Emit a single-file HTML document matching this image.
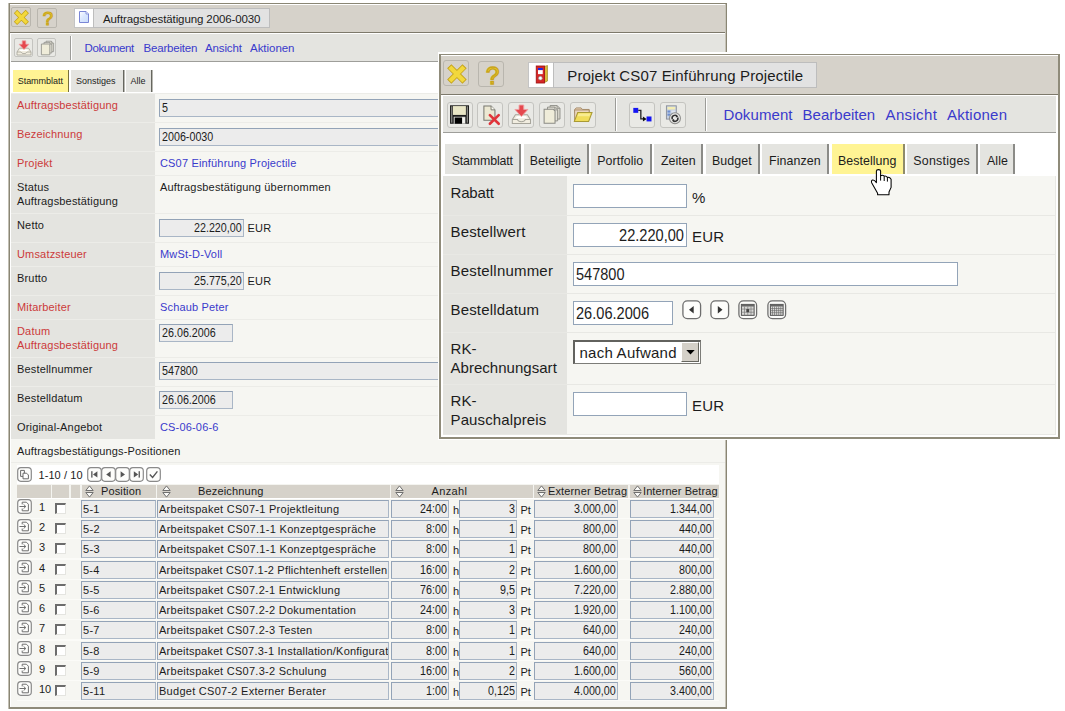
<!DOCTYPE html><html><head><meta charset="utf-8"><title>Auftragsbestätigung 2006-0030</title><style>
html,body{margin:0;padding:0;background:#fff;}
body{width:1065px;height:711px;position:relative;overflow:hidden;font-family:"Liberation Sans",Arial,sans-serif;font-size:11px;color:#1c1c1c;}
.a{position:absolute;box-sizing:border-box;}
svg.a{overflow:visible;}
.win{position:absolute;box-sizing:border-box;background:#fff;border:1px solid #8a8674;}
.tb{background:#d6d2ca;border-top:1px solid #fff;border-bottom:1px solid #7d796b;}
.bar{background:#e4e4e0;border-bottom:1px solid #9e9e9a;}
.btn{position:absolute;box-sizing:border-box;border:1px solid #b9b6ae;border-radius:2px;background:transparent;}
.btn.l{border-color:#c4c4c0;background:#e9e9e5;}
.lbl{position:absolute;box-sizing:border-box;background:#e4e4e0;border-bottom:1px solid #ecece8;}
.val{position:absolute;box-sizing:border-box;background:#f6f6f2;border-bottom:1px solid #ecece8;}
.red{color:#cc3a3a;}
.blue{color:#3a3acc;}
.inp{position:absolute;box-sizing:border-box;border:1px solid #a9b6c6;border-top-color:#93a3b7;border-left-color:#93a3b7;background:#ececec;}
.inp.w{background:#fff;}
.t{position:absolute;white-space:nowrap;}
.tab{position:absolute;box-sizing:border-box;background:#e4e4e0;border-right:1px solid #66665f;box-shadow:1px 0 0 #b8b8b2;}
.tab.on{background:#fff494;border-right:1px solid #77703a;box-shadow:none;}
.sep{position:absolute;width:2px;background:#fff;border-left:1px solid #9c9c98;box-sizing:border-box;}
</style></head><body>
<div class="win" style="left:9px;top:3px;width:718px;height:706px;border-left:1px solid #8a8674;border-right:1px solid #8a8674;border-bottom:2px solid #8f8b7a;box-shadow:inset -1px 0 0 #c6c3b8,-1px 0 0 #c2bfb4;"></div>
<div class="a tb" style="left:10px;top:4px;width:715px;height:29px;"></div>
<div class="btn" style="left:11px;top:7px;width:20px;height:20px;"></div><svg class="a" style="left:13px;top:9px;" width="16" height="16" viewBox="0 0 16 16"><path d="M2.5 2.5 L14.3 14.3 M14.3 2.5 L2.5 14.3" stroke="#c4a21a" stroke-width="4.6" stroke-linecap="butt" fill="none"/><path d="M3 3 L13.8 13.8 M13.8 3 L3 13.8" stroke="#f2d83c" stroke-width="3.3" stroke-linecap="butt" fill="none"/></svg>
<div class="btn" style="left:37px;top:8px;width:20px;height:20px;"></div><svg class="a" style="left:39px;top:10px;" width="16" height="16" viewBox="0 0 16 16"><text x="9" y="15.4" text-anchor="middle" font-family="Liberation Sans, Arial, sans-serif" font-weight="normal" font-size="18.5" fill="#f0d232" stroke="#c9a51c" stroke-width="1.1">?</text></svg>
<div class="a" style="left:74px;top:8px;width:20px;height:20px;background:#fff;border:1px solid #c4c4c4;"></div><svg class="a" style="left:76px;top:9px;" width="16" height="16" viewBox="0 0 16 16"><defs><linearGradient id="dg" x1="0" y1="0" x2="1" y2="1"><stop offset="0" stop-color="#ffffff"/><stop offset="0.45" stop-color="#dbe8ff"/><stop offset="1" stop-color="#c9dcfa"/></linearGradient></defs><path d="M3.5 2.5 H10 L12.5 5 V13.5 H3.5 Z" fill="url(#dg)" stroke="#7a86d6" stroke-width="1"/><path d="M10 2.5 V5 H12.5" fill="#eef4ff" stroke="#7a86d6" stroke-width="0.8"/></svg>
<div class="a" style="left:93px;top:8px;width:177px;height:20px;background:#e2e2e2;border:1px solid #bdbdbd;"></div>
<div class="t " style="left:103px;top:11.5px;font-size:11.5px;line-height:14.5px;letter-spacing:-0.107px;">Auftragsbestätigung 2006-0030</div>
<div class="a bar" style="left:11px;top:34px;width:714px;height:28px;"></div>
<div class="btn l" style="left:14px;top:38px;width:19px;height:19px;"></div><svg class="a" style="left:15.5px;top:39.5px;" width="16" height="16" viewBox="0 0 16 16"><path d="M3.4 8.2 H12.6 L15 12 V15 H1 V12 Z" fill="#f1ede0" stroke="#a7a59b" stroke-width="0.8"/><path d="M1 12 H5 Q5.5 13.6 8 13.6 Q10.5 13.6 11 12 H15" fill="none" stroke="#a7a59b" stroke-width="0.8"/><path d="M4.6 9.4 H11.4 L12.4 11 H3.6 Z" fill="#ffffff" stroke="none"/><path d="M6.2 0.8 H9.8 V4.2 H13 L8 9.6 L3 4.2 H6.2 Z" fill="#e5484e" stroke="#efa0a2" stroke-width="0.7"/></svg>
<div class="btn l" style="left:37px;top:38px;width:19px;height:19px;"></div><svg class="a" style="left:38.5px;top:39.5px;" width="16" height="16" viewBox="0 0 16 16"><path d="M7 1.2 H12.4 L14.6 3.4 V11.6 H7 Z" fill="#dcdad0" stroke="#8b8b85" stroke-width="0.7"/><path d="M5 2.4 H10.6 L12.8 4.6 V13 H5 Z" fill="#e4e2d8" stroke="#8b8b85" stroke-width="0.7"/><path d="M2.4 4 H9.4 L10.8 5.4 V14.8 H2.4 Z" fill="#efecd9" stroke="#8b8b85" stroke-width="0.8"/><path d="M12.4 1.2 V3.4 H14.6 M10.6 2.4 V4.6 H12.8" fill="none" stroke="#8b8b85" stroke-width="0.6"/></svg>
<div class="sep" style="left:70px;top:36px;height:24px;"></div>
<div class="t blue" style="left:84.5px;top:41px;font-size:11.5px;line-height:14.5px;letter-spacing:-0.373px;">Dokument</div>
<div class="t blue" style="left:143.6px;top:41px;font-size:11.5px;line-height:14.5px;letter-spacing:-0.214px;">Bearbeiten</div>
<div class="t blue" style="left:204.9px;top:41px;font-size:11.5px;line-height:14.5px;letter-spacing:-0.102px;">Ansicht</div>
<div class="t blue" style="left:250px;top:41px;font-size:11.5px;line-height:14.5px;letter-spacing:-0.036px;">Aktionen</div>
<div class="tab on" style="left:13px;top:70px;width:56px;height:22px;"></div>
<div class="t " style="left:17.7px;top:75px;font-size:9px;line-height:12px;letter-spacing:-0.024px;">Stammblatt</div>
<div class="tab" style="left:71px;top:70px;width:53px;height:22px;"></div>
<div class="t " style="left:76px;top:75px;font-size:9px;line-height:12px;letter-spacing:-0.003px;">Sonstiges</div>
<div class="tab" style="left:125.5px;top:70px;width:26.5px;height:22px;"></div>
<div class="t " style="left:130.5px;top:75px;font-size:9px;line-height:12px;letter-spacing:-0.003px;">Alle</div>
<div class="lbl" style="left:11px;top:93px;width:144px;height:29px;border-bottom:none;border-top:1px solid #ecece8;"></div>
<div class="val" style="left:155px;top:93px;width:570px;height:29px;border-bottom:none;border-top:1px solid #ecece8;"></div>
<div class="t red" style="left:17px;top:98px;font-size:11px;line-height:14px;letter-spacing:0.170px;">Auftragsbestätigung</div>
<div class="inp" style="left:159px;top:99px;width:566px;height:18px;border-right:none;"></div>
<div class="t " style="left:162px;top:101px;font-size:12px;line-height:15px;transform:scaleX(0.8937);transform-origin:0 0;">5</div>
<div class="lbl" style="left:11px;top:122px;width:144px;height:29px;border-bottom:none;border-top:1px solid #ecece8;"></div>
<div class="val" style="left:155px;top:122px;width:570px;height:29px;border-bottom:none;border-top:1px solid #ecece8;"></div>
<div class="t red" style="left:17px;top:127px;font-size:11px;line-height:14px;letter-spacing:0.170px;">Bezeichnung</div>
<div class="inp" style="left:159px;top:128px;width:566px;height:18px;border-right:none;"></div>
<div class="t " style="left:162px;top:130px;font-size:12px;line-height:15px;transform:scaleX(0.8937);transform-origin:0 0;">2006-0030</div>
<div class="lbl" style="left:11px;top:151px;width:144px;height:24px;border-bottom:none;border-top:1px solid #ecece8;"></div>
<div class="val" style="left:155px;top:151px;width:570px;height:24px;border-bottom:none;border-top:1px solid #ecece8;"></div>
<div class="t red" style="left:17px;top:156px;font-size:11px;line-height:14px;letter-spacing:0.170px;">Projekt</div>
<div class="t blue" style="left:160px;top:156px;font-size:11px;line-height:14px;letter-spacing:0.170px;">CS07 Einführung Projectile</div>
<div class="lbl" style="left:11px;top:175px;width:144px;height:38px;border-bottom:none;border-top:1px solid #ecece8;"></div>
<div class="val" style="left:155px;top:175px;width:570px;height:38px;border-bottom:none;border-top:1px solid #ecece8;"></div>
<div class="t " style="left:17px;top:180px;font-size:11px;line-height:14px;letter-spacing:0.170px;">Status</div>
<div class="t " style="left:17px;top:194px;font-size:11px;line-height:14px;letter-spacing:0.170px;">Auftragsbestätigung</div>
<div class="t " style="left:160px;top:180px;font-size:11px;line-height:14px;letter-spacing:0.170px;">Auftragsbestätigung übernommen</div>
<div class="lbl" style="left:11px;top:213px;width:144px;height:29px;border-bottom:none;border-top:1px solid #ecece8;"></div>
<div class="val" style="left:155px;top:213px;width:570px;height:29px;border-bottom:none;border-top:1px solid #ecece8;"></div>
<div class="t " style="left:17px;top:218px;font-size:11px;line-height:14px;letter-spacing:0.170px;">Netto</div>
<div class="inp" style="left:159px;top:219px;width:85px;height:18px;"></div>
<div class="t " style="left:194.28715625px;top:221px;font-size:12px;line-height:15px;transform:scaleX(0.8937);transform-origin:0 0;">22.220,00</div>
<div class="t " style="left:247.5px;top:221px;font-size:11px;line-height:14px;letter-spacing:0.200px;">EUR</div>
<div class="lbl" style="left:11px;top:242px;width:144px;height:24px;border-bottom:none;border-top:1px solid #ecece8;"></div>
<div class="val" style="left:155px;top:242px;width:570px;height:24px;border-bottom:none;border-top:1px solid #ecece8;"></div>
<div class="t red" style="left:17px;top:247px;font-size:11px;line-height:14px;letter-spacing:0.170px;">Umsatzsteuer</div>
<div class="t blue" style="left:160px;top:247px;font-size:11px;line-height:14px;letter-spacing:0.170px;">MwSt-D-Voll</div>
<div class="lbl" style="left:11px;top:266px;width:144px;height:29px;border-bottom:none;border-top:1px solid #ecece8;"></div>
<div class="val" style="left:155px;top:266px;width:570px;height:29px;border-bottom:none;border-top:1px solid #ecece8;"></div>
<div class="t " style="left:17px;top:271px;font-size:11px;line-height:14px;letter-spacing:0.170px;">Brutto</div>
<div class="inp" style="left:159px;top:272px;width:85px;height:18px;"></div>
<div class="t " style="left:194.28715625px;top:274px;font-size:12px;line-height:15px;transform:scaleX(0.8937);transform-origin:0 0;">25.775,20</div>
<div class="t " style="left:247.5px;top:274px;font-size:11px;line-height:14px;letter-spacing:0.200px;">EUR</div>
<div class="lbl" style="left:11px;top:295px;width:144px;height:24px;border-bottom:none;border-top:1px solid #ecece8;"></div>
<div class="val" style="left:155px;top:295px;width:570px;height:24px;border-bottom:none;border-top:1px solid #ecece8;"></div>
<div class="t red" style="left:17px;top:300px;font-size:11px;line-height:14px;letter-spacing:0.170px;">Mitarbeiter</div>
<div class="t blue" style="left:160px;top:300px;font-size:11px;line-height:14px;letter-spacing:0.170px;">Schaub Peter</div>
<div class="lbl" style="left:11px;top:319px;width:144px;height:38px;border-bottom:none;border-top:1px solid #ecece8;"></div>
<div class="val" style="left:155px;top:319px;width:570px;height:38px;border-bottom:none;border-top:1px solid #ecece8;"></div>
<div class="t red" style="left:17px;top:324px;font-size:11px;line-height:14px;letter-spacing:0.170px;">Datum</div>
<div class="t red" style="left:17px;top:338px;font-size:11px;line-height:14px;letter-spacing:0.170px;">Auftragsbestätigung</div>
<div class="inp" style="left:159px;top:324px;width:74px;height:18px;"></div>
<div class="t " style="left:162px;top:326px;font-size:12px;line-height:15px;transform:scaleX(0.8938);transform-origin:0 0;">26.06.2006</div>
<div class="lbl" style="left:11px;top:357px;width:144px;height:29px;border-bottom:none;border-top:1px solid #ecece8;"></div>
<div class="val" style="left:155px;top:357px;width:570px;height:29px;border-bottom:none;border-top:1px solid #ecece8;"></div>
<div class="t " style="left:17px;top:362px;font-size:11px;line-height:14px;letter-spacing:0.170px;">Bestellnummer</div>
<div class="inp" style="left:159px;top:362px;width:566px;height:18px;border-right:none;"></div>
<div class="t " style="left:162px;top:364px;font-size:12px;line-height:15px;transform:scaleX(0.8937);transform-origin:0 0;">547800</div>
<div class="lbl" style="left:11px;top:386px;width:144px;height:29px;border-bottom:none;border-top:1px solid #ecece8;"></div>
<div class="val" style="left:155px;top:386px;width:570px;height:29px;border-bottom:none;border-top:1px solid #ecece8;"></div>
<div class="t " style="left:17px;top:391px;font-size:11px;line-height:14px;letter-spacing:0.170px;">Bestelldatum</div>
<div class="inp" style="left:159px;top:391px;width:74px;height:18px;"></div>
<div class="t " style="left:162px;top:393px;font-size:12px;line-height:15px;transform:scaleX(0.8938);transform-origin:0 0;">26.06.2006</div>
<div class="lbl" style="left:11px;top:415px;width:144px;height:24px;border-bottom:none;border-top:1px solid #ecece8;"></div>
<div class="val" style="left:155px;top:415px;width:570px;height:24px;border-bottom:none;border-top:1px solid #ecece8;"></div>
<div class="t " style="left:17px;top:420px;font-size:11px;line-height:14px;letter-spacing:0.170px;">Original-Angebot</div>
<div class="t blue" style="left:160px;top:420px;font-size:11px;line-height:14px;letter-spacing:0.170px;">CS-06-06-6</div>
<div class="val" style="left:11px;top:439px;width:714px;height:24px;"></div>
<div class="t " style="left:17px;top:444px;font-size:11px;line-height:14px;letter-spacing:0.170px;">Auftragsbestätigungs-Positionen</div>
<div class="a" style="left:11px;top:463px;width:714px;height:244px;background:#f6f6f2;"></div>
<div class="a" style="left:17px;top:465px;width:702px;height:34px;background:#fff;"></div>
<div class="a" style="left:17px;top:499px;width:702px;height:202px;background:#fbfbf8;"></div>
<svg class="a" style="left:17px;top:467px;" width="15" height="15" viewBox="0 0 15 15"><rect x="0.7" y="0.7" width="13.6" height="13.6" rx="3.2" ry="3.2" fill="#fdfdfb" stroke="#8a8a8a" stroke-width="1.2"/><path d="M3.6 3.4 H7.4 V7" fill="none" stroke="#6a6a6a" stroke-width="1"/><path d="M3.6 3.4 V9.4 H6" fill="none" stroke="#6a6a6a" stroke-width="1"/><path d="M6 6.2 H9.6 L11.4 8 V11.8 H6 Z" fill="#fff" stroke="#6a6a6a" stroke-width="1"/></svg>
<div class="t " style="left:38.5px;top:468px;font-size:11px;line-height:14px;letter-spacing:0.072px;">1-10 / 10</div>
<svg class="a" style="left:87px;top:467px;" width="15" height="15" viewBox="0 0 15 15"><rect x="0.7" y="0.7" width="13.6" height="13.6" rx="3.2" ry="3.2" fill="#fdfdfb" stroke="#8a8a8a" stroke-width="1.2"/><rect x="4.2" y="4.2" width="1.3" height="6.4" fill="#555"/><path d="M10.4 4.2 V10.6 L6 7.4 Z" fill="#555"/></svg>
<svg class="a" style="left:101px;top:467px;" width="15" height="15" viewBox="0 0 15 15"><rect x="0.7" y="0.7" width="13.6" height="13.6" rx="3.2" ry="3.2" fill="#fdfdfb" stroke="#8a8a8a" stroke-width="1.2"/><path d="M9.6 4.2 V10.6 L5.2 7.4 Z" fill="#555"/></svg>
<svg class="a" style="left:115px;top:467px;" width="15" height="15" viewBox="0 0 15 15"><rect x="0.7" y="0.7" width="13.6" height="13.6" rx="3.2" ry="3.2" fill="#fdfdfb" stroke="#8a8a8a" stroke-width="1.2"/><path d="M5.6 4.2 V10.6 L10 7.4 Z" fill="#555"/></svg>
<svg class="a" style="left:129px;top:467px;" width="15" height="15" viewBox="0 0 15 15"><rect x="0.7" y="0.7" width="13.6" height="13.6" rx="3.2" ry="3.2" fill="#fdfdfb" stroke="#8a8a8a" stroke-width="1.2"/><rect x="9.6" y="4.2" width="1.3" height="6.4" fill="#555"/><path d="M4.8 4.2 V10.6 L9.2 7.4 Z" fill="#555"/></svg>
<svg class="a" style="left:146px;top:467px;" width="15" height="15" viewBox="0 0 15 15"><rect x="0.7" y="0.7" width="13.6" height="13.6" rx="3.2" ry="3.2" fill="#fdfdfb" stroke="#8a8a8a" stroke-width="1.2"/><path d="M3.8 7.4 L6.6 10.4 L11.4 4.4" fill="none" stroke="#555" stroke-width="1.4"/></svg>
<div class="a" style="left:17px;top:484px;width:702px;height:14px;background:#f4f4f0;"></div>
<div class="a" style="left:17px;top:484.5px;width:33.5px;height:13.5px;background:#d6d2ca;"></div>
<div class="a" style="left:52px;top:484.5px;width:17px;height:13.5px;background:#d6d2ca;"></div>
<div class="a" style="left:70.5px;top:484.5px;width:9.5px;height:13.5px;background:#d6d2ca;"></div>
<div class="a" style="left:81.5px;top:484.5px;width:74.0px;height:13.5px;background:#d6d2ca;"></div>
<div class="a" style="left:157px;top:484.5px;width:233px;height:13.5px;background:#d6d2ca;"></div>
<div class="a" style="left:391px;top:484.5px;width:141.5px;height:13.5px;background:#d6d2ca;"></div>
<div class="a" style="left:534px;top:484.5px;width:94px;height:13.5px;background:#d6d2ca;"></div>
<div class="a" style="left:629.5px;top:484.5px;width:89.5px;height:13.5px;background:#d6d2ca;"></div>
<div class="t " style="left:101px;top:484px;font-size:11px;line-height:14px;letter-spacing:0.124px;">Position</div>
<svg class="a" style="left:85.0px;top:485px;" width="9" height="13" viewBox="0 0 9 13"><path d="M0.8 5.5 L4.5 0.9 L8.2 5.5 Z" fill="#fafaf8" stroke="#707070" stroke-width="1"/><path d="M0.8 7.5 L4.5 12.1 L8.2 7.5 Z" fill="#fafaf8" stroke="#707070" stroke-width="1"/></svg>
<div class="t " style="left:198px;top:484px;font-size:11px;line-height:14px;letter-spacing:0.170px;">Bezeichnung</div>
<svg class="a" style="left:161.5px;top:485px;" width="9" height="13" viewBox="0 0 9 13"><path d="M0.8 5.5 L4.5 0.9 L8.2 5.5 Z" fill="#fafaf8" stroke="#707070" stroke-width="1"/><path d="M0.8 7.5 L4.5 12.1 L8.2 7.5 Z" fill="#fafaf8" stroke="#707070" stroke-width="1"/></svg>
<div class="t " style="left:431.5px;top:484px;font-size:11px;line-height:14px;letter-spacing:0.373px;">Anzahl</div>
<svg class="a" style="left:395.0px;top:485px;" width="9" height="13" viewBox="0 0 9 13"><path d="M0.8 5.5 L4.5 0.9 L8.2 5.5 Z" fill="#fafaf8" stroke="#707070" stroke-width="1"/><path d="M0.8 7.5 L4.5 12.1 L8.2 7.5 Z" fill="#fafaf8" stroke="#707070" stroke-width="1"/></svg>
<div class="t " style="left:548px;top:484px;font-size:11px;line-height:14px;letter-spacing:0.140px;">Externer Betrag</div>
<svg class="a" style="left:537.0px;top:485px;" width="9" height="13" viewBox="0 0 9 13"><path d="M0.8 5.5 L4.5 0.9 L8.2 5.5 Z" fill="#fafaf8" stroke="#707070" stroke-width="1"/><path d="M0.8 7.5 L4.5 12.1 L8.2 7.5 Z" fill="#fafaf8" stroke="#707070" stroke-width="1"/></svg>
<div class="t " style="left:643px;top:484px;font-size:11px;line-height:14px;letter-spacing:0.080px;">Interner Betrag</div>
<svg class="a" style="left:632.5px;top:485px;" width="9" height="13" viewBox="0 0 9 13"><path d="M0.8 5.5 L4.5 0.9 L8.2 5.5 Z" fill="#fafaf8" stroke="#707070" stroke-width="1"/><path d="M0.8 7.5 L4.5 12.1 L8.2 7.5 Z" fill="#fafaf8" stroke="#707070" stroke-width="1"/></svg>
<div class="a" style="left:17px;top:499px;width:702px;height:19px;background:#f6f6f2;"></div>
<svg class="a" style="left:17px;top:499px;" width="15" height="15" viewBox="0 0 15 15"><rect x="0.7" y="0.7" width="13.6" height="13.6" rx="3.2" ry="3.2" fill="#fdfdfb" stroke="#8a8a8a" stroke-width="1.2"/><path d="M5.2 3.2 H9.4 L11.4 5.2 V11.8 H5.2 V9.6" fill="none" stroke="#6e6e6e" stroke-width="1"/><path d="M5.2 3.2 V5.4" stroke="#6e6e6e" stroke-width="1"/><path d="M2.4 7.5 H8.6 M6.6 5.4 L8.8 7.5 L6.6 9.6" fill="none" stroke="#6e6e6e" stroke-width="1"/></svg>
<div class="t " style="left:39px;top:500px;font-size:11px;line-height:14px;letter-spacing:0.000px;">1</div>
<div class="a" style="left:55px;top:503px;width:11px;height:11px;background:#fff;border-top:2px solid #6c6c6c;border-left:2px solid #6c6c6c;border-right:1px solid #e4e4e0;border-bottom:1px solid #e4e4e0;"></div>
<div class="inp" style="left:81px;top:500px;width:74.5px;height:18px;"></div>
<div class="t" style="left:83px;top:502px;width:71.5px;overflow:hidden;font-size:11px;line-height:14px;letter-spacing:0.27px;">5-1</div>
<div class="inp" style="left:157px;top:500px;width:232px;height:18px;"></div>
<div class="t" style="left:159px;top:502px;width:229px;overflow:hidden;font-size:11px;line-height:14px;letter-spacing:0.27px;">Arbeitspaket CS07-1 Projektleitung</div>
<div class="inp" style="left:391px;top:500px;width:57.5px;height:18px;"></div>
<div class="t " style="left:419.661190234375px;top:502px;font-size:12px;line-height:15px;transform:scaleX(0.8938);transform-origin:0 0;">24:00</div>
<div class="t " style="left:453px;top:503px;font-size:11px;line-height:14px;">h</div>
<div class="inp" style="left:459px;top:500px;width:58px;height:18px;"></div>
<div class="t " style="left:509.03522421875px;top:502px;font-size:12px;line-height:15px;transform:scaleX(0.8937);transform-origin:0 0;">3</div>
<div class="t " style="left:520.5px;top:503px;font-size:11px;line-height:14px;">Pt</div>
<div class="inp" style="left:534px;top:500px;width:84px;height:18px;"></div>
<div class="t " style="left:574.25193203125px;top:502px;font-size:12px;line-height:15px;transform:scaleX(0.8937);transform-origin:0 0;">3.000,00</div>
<div class="inp" style="left:629.5px;top:500px;width:84px;height:18px;"></div>
<div class="t " style="left:669.75193203125px;top:502px;font-size:12px;line-height:15px;transform:scaleX(0.8937);transform-origin:0 0;">1.344,00</div>
<div class="a" style="left:17px;top:519px;width:702px;height:19px;background:#f6f6f2;"></div>
<svg class="a" style="left:17px;top:519px;" width="15" height="15" viewBox="0 0 15 15"><rect x="0.7" y="0.7" width="13.6" height="13.6" rx="3.2" ry="3.2" fill="#fdfdfb" stroke="#8a8a8a" stroke-width="1.2"/><path d="M5.2 3.2 H9.4 L11.4 5.2 V11.8 H5.2 V9.6" fill="none" stroke="#6e6e6e" stroke-width="1"/><path d="M5.2 3.2 V5.4" stroke="#6e6e6e" stroke-width="1"/><path d="M2.4 7.5 H8.6 M6.6 5.4 L8.8 7.5 L6.6 9.6" fill="none" stroke="#6e6e6e" stroke-width="1"/></svg>
<div class="t " style="left:39px;top:520px;font-size:11px;line-height:14px;letter-spacing:0.000px;">2</div>
<div class="a" style="left:55px;top:523px;width:11px;height:11px;background:#fff;border-top:2px solid #6c6c6c;border-left:2px solid #6c6c6c;border-right:1px solid #e4e4e0;border-bottom:1px solid #e4e4e0;"></div>
<div class="inp" style="left:81px;top:520px;width:74.5px;height:18px;"></div>
<div class="t" style="left:83px;top:522px;width:71.5px;overflow:hidden;font-size:11px;line-height:14px;letter-spacing:0.31px;">5-2</div>
<div class="inp" style="left:157px;top:520px;width:232px;height:18px;"></div>
<div class="t" style="left:159px;top:522px;width:229px;overflow:hidden;font-size:11px;line-height:14px;letter-spacing:0.31px;">Arbeitspaket CS07.1-1 Konzeptgespräche</div>
<div class="inp" style="left:391px;top:520px;width:57.5px;height:18px;"></div>
<div class="t " style="left:425.625966015625px;top:522px;font-size:12px;line-height:15px;transform:scaleX(0.8937);transform-origin:0 0;">8:00</div>
<div class="t " style="left:453px;top:523px;font-size:11px;line-height:14px;">h</div>
<div class="inp" style="left:459px;top:520px;width:58px;height:18px;"></div>
<div class="t " style="left:509.03522421875px;top:522px;font-size:12px;line-height:15px;transform:scaleX(0.8937);transform-origin:0 0;">1</div>
<div class="t " style="left:520.5px;top:523px;font-size:11px;line-height:14px;">Pt</div>
<div class="inp" style="left:534px;top:520px;width:84px;height:18px;"></div>
<div class="t " style="left:583.196414453125px;top:522px;font-size:12px;line-height:15px;transform:scaleX(0.8937);transform-origin:0 0;">800,00</div>
<div class="inp" style="left:629.5px;top:520px;width:84px;height:18px;"></div>
<div class="t " style="left:678.696414453125px;top:522px;font-size:12px;line-height:15px;transform:scaleX(0.8937);transform-origin:0 0;">440,00</div>
<div class="a" style="left:17px;top:539px;width:702px;height:19px;background:#f6f6f2;"></div>
<svg class="a" style="left:17px;top:539px;" width="15" height="15" viewBox="0 0 15 15"><rect x="0.7" y="0.7" width="13.6" height="13.6" rx="3.2" ry="3.2" fill="#fdfdfb" stroke="#8a8a8a" stroke-width="1.2"/><path d="M5.2 3.2 H9.4 L11.4 5.2 V11.8 H5.2 V9.6" fill="none" stroke="#6e6e6e" stroke-width="1"/><path d="M5.2 3.2 V5.4" stroke="#6e6e6e" stroke-width="1"/><path d="M2.4 7.5 H8.6 M6.6 5.4 L8.8 7.5 L6.6 9.6" fill="none" stroke="#6e6e6e" stroke-width="1"/></svg>
<div class="t " style="left:39px;top:540px;font-size:11px;line-height:14px;letter-spacing:0.000px;">3</div>
<div class="a" style="left:55px;top:543px;width:11px;height:11px;background:#fff;border-top:2px solid #6c6c6c;border-left:2px solid #6c6c6c;border-right:1px solid #e4e4e0;border-bottom:1px solid #e4e4e0;"></div>
<div class="inp" style="left:81px;top:540px;width:74.5px;height:18px;"></div>
<div class="t" style="left:83px;top:542px;width:71.5px;overflow:hidden;font-size:11px;line-height:14px;letter-spacing:0.31px;">5-3</div>
<div class="inp" style="left:157px;top:540px;width:232px;height:18px;"></div>
<div class="t" style="left:159px;top:542px;width:229px;overflow:hidden;font-size:11px;line-height:14px;letter-spacing:0.31px;">Arbeitspaket CS07.1-1 Konzeptgespräche</div>
<div class="inp" style="left:391px;top:540px;width:57.5px;height:18px;"></div>
<div class="t " style="left:425.625966015625px;top:542px;font-size:12px;line-height:15px;transform:scaleX(0.8937);transform-origin:0 0;">8:00</div>
<div class="t " style="left:453px;top:543px;font-size:11px;line-height:14px;">h</div>
<div class="inp" style="left:459px;top:540px;width:58px;height:18px;"></div>
<div class="t " style="left:509.03522421875px;top:542px;font-size:12px;line-height:15px;transform:scaleX(0.8937);transform-origin:0 0;">1</div>
<div class="t " style="left:520.5px;top:543px;font-size:11px;line-height:14px;">Pt</div>
<div class="inp" style="left:534px;top:540px;width:84px;height:18px;"></div>
<div class="t " style="left:583.196414453125px;top:542px;font-size:12px;line-height:15px;transform:scaleX(0.8937);transform-origin:0 0;">800,00</div>
<div class="inp" style="left:629.5px;top:540px;width:84px;height:18px;"></div>
<div class="t " style="left:678.696414453125px;top:542px;font-size:12px;line-height:15px;transform:scaleX(0.8937);transform-origin:0 0;">440,00</div>
<div class="a" style="left:17px;top:560px;width:702px;height:19px;background:#f6f6f2;"></div>
<svg class="a" style="left:17px;top:560px;" width="15" height="15" viewBox="0 0 15 15"><rect x="0.7" y="0.7" width="13.6" height="13.6" rx="3.2" ry="3.2" fill="#fdfdfb" stroke="#8a8a8a" stroke-width="1.2"/><path d="M5.2 3.2 H9.4 L11.4 5.2 V11.8 H5.2 V9.6" fill="none" stroke="#6e6e6e" stroke-width="1"/><path d="M5.2 3.2 V5.4" stroke="#6e6e6e" stroke-width="1"/><path d="M2.4 7.5 H8.6 M6.6 5.4 L8.8 7.5 L6.6 9.6" fill="none" stroke="#6e6e6e" stroke-width="1"/></svg>
<div class="t " style="left:39px;top:561px;font-size:11px;line-height:14px;letter-spacing:0.000px;">4</div>
<div class="a" style="left:55px;top:564px;width:11px;height:11px;background:#fff;border-top:2px solid #6c6c6c;border-left:2px solid #6c6c6c;border-right:1px solid #e4e4e0;border-bottom:1px solid #e4e4e0;"></div>
<div class="inp" style="left:81px;top:561px;width:74.5px;height:18px;"></div>
<div class="t" style="left:83px;top:563px;width:71.5px;overflow:hidden;font-size:11px;line-height:14px;letter-spacing:0.21px;">5-4</div>
<div class="inp" style="left:157px;top:561px;width:232px;height:18px;"></div>
<div class="t" style="left:159px;top:563px;width:229px;overflow:hidden;font-size:11px;line-height:14px;letter-spacing:0.21px;">Arbeitspaket CS07.1-2 Pflichtenheft erstellen</div>
<div class="inp" style="left:391px;top:561px;width:57.5px;height:18px;"></div>
<div class="t " style="left:419.661190234375px;top:563px;font-size:12px;line-height:15px;transform:scaleX(0.8938);transform-origin:0 0;">16:00</div>
<div class="t " style="left:453px;top:564px;font-size:11px;line-height:14px;">h</div>
<div class="inp" style="left:459px;top:561px;width:58px;height:18px;"></div>
<div class="t " style="left:509.03522421875px;top:563px;font-size:12px;line-height:15px;transform:scaleX(0.8937);transform-origin:0 0;">2</div>
<div class="t " style="left:520.5px;top:564px;font-size:11px;line-height:14px;">Pt</div>
<div class="inp" style="left:534px;top:561px;width:84px;height:18px;"></div>
<div class="t " style="left:574.25193203125px;top:563px;font-size:12px;line-height:15px;transform:scaleX(0.8937);transform-origin:0 0;">1.600,00</div>
<div class="inp" style="left:629.5px;top:561px;width:84px;height:18px;"></div>
<div class="t " style="left:678.696414453125px;top:563px;font-size:12px;line-height:15px;transform:scaleX(0.8937);transform-origin:0 0;">800,00</div>
<div class="a" style="left:17px;top:580px;width:702px;height:19px;background:#f6f6f2;"></div>
<svg class="a" style="left:17px;top:580px;" width="15" height="15" viewBox="0 0 15 15"><rect x="0.7" y="0.7" width="13.6" height="13.6" rx="3.2" ry="3.2" fill="#fdfdfb" stroke="#8a8a8a" stroke-width="1.2"/><path d="M5.2 3.2 H9.4 L11.4 5.2 V11.8 H5.2 V9.6" fill="none" stroke="#6e6e6e" stroke-width="1"/><path d="M5.2 3.2 V5.4" stroke="#6e6e6e" stroke-width="1"/><path d="M2.4 7.5 H8.6 M6.6 5.4 L8.8 7.5 L6.6 9.6" fill="none" stroke="#6e6e6e" stroke-width="1"/></svg>
<div class="t " style="left:39px;top:581px;font-size:11px;line-height:14px;letter-spacing:0.000px;">5</div>
<div class="a" style="left:55px;top:584px;width:11px;height:11px;background:#fff;border-top:2px solid #6c6c6c;border-left:2px solid #6c6c6c;border-right:1px solid #e4e4e0;border-bottom:1px solid #e4e4e0;"></div>
<div class="inp" style="left:81px;top:581px;width:74.5px;height:18px;"></div>
<div class="t" style="left:83px;top:583px;width:71.5px;overflow:hidden;font-size:11px;line-height:14px;letter-spacing:0.27px;">5-5</div>
<div class="inp" style="left:157px;top:581px;width:232px;height:18px;"></div>
<div class="t" style="left:159px;top:583px;width:229px;overflow:hidden;font-size:11px;line-height:14px;letter-spacing:0.27px;">Arbeitspaket CS07.2-1 Entwicklung</div>
<div class="inp" style="left:391px;top:581px;width:57.5px;height:18px;"></div>
<div class="t " style="left:419.661190234375px;top:583px;font-size:12px;line-height:15px;transform:scaleX(0.8938);transform-origin:0 0;">76:00</div>
<div class="t " style="left:453px;top:584px;font-size:11px;line-height:14px;">h</div>
<div class="inp" style="left:459px;top:581px;width:58px;height:18px;"></div>
<div class="t " style="left:500.090741796875px;top:583px;font-size:12px;line-height:15px;transform:scaleX(0.8938);transform-origin:0 0;">9,5</div>
<div class="t " style="left:520.5px;top:584px;font-size:11px;line-height:14px;">Pt</div>
<div class="inp" style="left:534px;top:581px;width:84px;height:18px;"></div>
<div class="t " style="left:574.25193203125px;top:583px;font-size:12px;line-height:15px;transform:scaleX(0.8937);transform-origin:0 0;">7.220,00</div>
<div class="inp" style="left:629.5px;top:581px;width:84px;height:18px;"></div>
<div class="t " style="left:669.75193203125px;top:583px;font-size:12px;line-height:15px;transform:scaleX(0.8937);transform-origin:0 0;">2.880,00</div>
<div class="a" style="left:17px;top:600px;width:702px;height:19px;background:#f6f6f2;"></div>
<svg class="a" style="left:17px;top:600px;" width="15" height="15" viewBox="0 0 15 15"><rect x="0.7" y="0.7" width="13.6" height="13.6" rx="3.2" ry="3.2" fill="#fdfdfb" stroke="#8a8a8a" stroke-width="1.2"/><path d="M5.2 3.2 H9.4 L11.4 5.2 V11.8 H5.2 V9.6" fill="none" stroke="#6e6e6e" stroke-width="1"/><path d="M5.2 3.2 V5.4" stroke="#6e6e6e" stroke-width="1"/><path d="M2.4 7.5 H8.6 M6.6 5.4 L8.8 7.5 L6.6 9.6" fill="none" stroke="#6e6e6e" stroke-width="1"/></svg>
<div class="t " style="left:39px;top:601px;font-size:11px;line-height:14px;letter-spacing:0.000px;">6</div>
<div class="a" style="left:55px;top:604px;width:11px;height:11px;background:#fff;border-top:2px solid #6c6c6c;border-left:2px solid #6c6c6c;border-right:1px solid #e4e4e0;border-bottom:1px solid #e4e4e0;"></div>
<div class="inp" style="left:81px;top:601px;width:74.5px;height:18px;"></div>
<div class="t" style="left:83px;top:603px;width:71.5px;overflow:hidden;font-size:11px;line-height:14px;letter-spacing:0.27px;">5-6</div>
<div class="inp" style="left:157px;top:601px;width:232px;height:18px;"></div>
<div class="t" style="left:159px;top:603px;width:229px;overflow:hidden;font-size:11px;line-height:14px;letter-spacing:0.27px;">Arbeitspaket CS07.2-2 Dokumentation</div>
<div class="inp" style="left:391px;top:601px;width:57.5px;height:18px;"></div>
<div class="t " style="left:419.661190234375px;top:603px;font-size:12px;line-height:15px;transform:scaleX(0.8938);transform-origin:0 0;">24:00</div>
<div class="t " style="left:453px;top:604px;font-size:11px;line-height:14px;">h</div>
<div class="inp" style="left:459px;top:601px;width:58px;height:18px;"></div>
<div class="t " style="left:509.03522421875px;top:603px;font-size:12px;line-height:15px;transform:scaleX(0.8937);transform-origin:0 0;">3</div>
<div class="t " style="left:520.5px;top:604px;font-size:11px;line-height:14px;">Pt</div>
<div class="inp" style="left:534px;top:601px;width:84px;height:18px;"></div>
<div class="t " style="left:574.25193203125px;top:603px;font-size:12px;line-height:15px;transform:scaleX(0.8937);transform-origin:0 0;">1.920,00</div>
<div class="inp" style="left:629.5px;top:601px;width:84px;height:18px;"></div>
<div class="t " style="left:669.75193203125px;top:603px;font-size:12px;line-height:15px;transform:scaleX(0.8937);transform-origin:0 0;">1.100,00</div>
<div class="a" style="left:17px;top:620px;width:702px;height:19px;background:#f6f6f2;"></div>
<svg class="a" style="left:17px;top:620px;" width="15" height="15" viewBox="0 0 15 15"><rect x="0.7" y="0.7" width="13.6" height="13.6" rx="3.2" ry="3.2" fill="#fdfdfb" stroke="#8a8a8a" stroke-width="1.2"/><path d="M5.2 3.2 H9.4 L11.4 5.2 V11.8 H5.2 V9.6" fill="none" stroke="#6e6e6e" stroke-width="1"/><path d="M5.2 3.2 V5.4" stroke="#6e6e6e" stroke-width="1"/><path d="M2.4 7.5 H8.6 M6.6 5.4 L8.8 7.5 L6.6 9.6" fill="none" stroke="#6e6e6e" stroke-width="1"/></svg>
<div class="t " style="left:39px;top:621px;font-size:11px;line-height:14px;letter-spacing:0.000px;">7</div>
<div class="a" style="left:55px;top:624px;width:11px;height:11px;background:#fff;border-top:2px solid #6c6c6c;border-left:2px solid #6c6c6c;border-right:1px solid #e4e4e0;border-bottom:1px solid #e4e4e0;"></div>
<div class="inp" style="left:81px;top:621px;width:74.5px;height:18px;"></div>
<div class="t" style="left:83px;top:623px;width:71.5px;overflow:hidden;font-size:11px;line-height:14px;letter-spacing:0.27px;">5-7</div>
<div class="inp" style="left:157px;top:621px;width:232px;height:18px;"></div>
<div class="t" style="left:159px;top:623px;width:229px;overflow:hidden;font-size:11px;line-height:14px;letter-spacing:0.27px;">Arbeitspaket CS07.2-3 Testen</div>
<div class="inp" style="left:391px;top:621px;width:57.5px;height:18px;"></div>
<div class="t " style="left:425.625966015625px;top:623px;font-size:12px;line-height:15px;transform:scaleX(0.8937);transform-origin:0 0;">8:00</div>
<div class="t " style="left:453px;top:624px;font-size:11px;line-height:14px;">h</div>
<div class="inp" style="left:459px;top:621px;width:58px;height:18px;"></div>
<div class="t " style="left:509.03522421875px;top:623px;font-size:12px;line-height:15px;transform:scaleX(0.8937);transform-origin:0 0;">1</div>
<div class="t " style="left:520.5px;top:624px;font-size:11px;line-height:14px;">Pt</div>
<div class="inp" style="left:534px;top:621px;width:84px;height:18px;"></div>
<div class="t " style="left:583.196414453125px;top:623px;font-size:12px;line-height:15px;transform:scaleX(0.8937);transform-origin:0 0;">640,00</div>
<div class="inp" style="left:629.5px;top:621px;width:84px;height:18px;"></div>
<div class="t " style="left:678.696414453125px;top:623px;font-size:12px;line-height:15px;transform:scaleX(0.8937);transform-origin:0 0;">240,00</div>
<div class="a" style="left:17px;top:641px;width:702px;height:19px;background:#f6f6f2;"></div>
<svg class="a" style="left:17px;top:641px;" width="15" height="15" viewBox="0 0 15 15"><rect x="0.7" y="0.7" width="13.6" height="13.6" rx="3.2" ry="3.2" fill="#fdfdfb" stroke="#8a8a8a" stroke-width="1.2"/><path d="M5.2 3.2 H9.4 L11.4 5.2 V11.8 H5.2 V9.6" fill="none" stroke="#6e6e6e" stroke-width="1"/><path d="M5.2 3.2 V5.4" stroke="#6e6e6e" stroke-width="1"/><path d="M2.4 7.5 H8.6 M6.6 5.4 L8.8 7.5 L6.6 9.6" fill="none" stroke="#6e6e6e" stroke-width="1"/></svg>
<div class="t " style="left:39px;top:642px;font-size:11px;line-height:14px;letter-spacing:0.000px;">8</div>
<div class="a" style="left:55px;top:645px;width:11px;height:11px;background:#fff;border-top:2px solid #6c6c6c;border-left:2px solid #6c6c6c;border-right:1px solid #e4e4e0;border-bottom:1px solid #e4e4e0;"></div>
<div class="inp" style="left:81px;top:642px;width:74.5px;height:18px;"></div>
<div class="t" style="left:83px;top:644px;width:71.5px;overflow:hidden;font-size:11px;line-height:14px;letter-spacing:0.22px;">5-8</div>
<div class="inp" style="left:157px;top:642px;width:232px;height:18px;"></div>
<div class="t" style="left:159px;top:644px;width:229px;overflow:hidden;font-size:11px;line-height:14px;letter-spacing:0.22px;">Arbeitspaket CS07.3-1 Installation/Konfigurat</div>
<div class="inp" style="left:391px;top:642px;width:57.5px;height:18px;"></div>
<div class="t " style="left:425.625966015625px;top:644px;font-size:12px;line-height:15px;transform:scaleX(0.8937);transform-origin:0 0;">8:00</div>
<div class="t " style="left:453px;top:645px;font-size:11px;line-height:14px;">h</div>
<div class="inp" style="left:459px;top:642px;width:58px;height:18px;"></div>
<div class="t " style="left:509.03522421875px;top:644px;font-size:12px;line-height:15px;transform:scaleX(0.8937);transform-origin:0 0;">1</div>
<div class="t " style="left:520.5px;top:645px;font-size:11px;line-height:14px;">Pt</div>
<div class="inp" style="left:534px;top:642px;width:84px;height:18px;"></div>
<div class="t " style="left:583.196414453125px;top:644px;font-size:12px;line-height:15px;transform:scaleX(0.8937);transform-origin:0 0;">640,00</div>
<div class="inp" style="left:629.5px;top:642px;width:84px;height:18px;"></div>
<div class="t " style="left:678.696414453125px;top:644px;font-size:12px;line-height:15px;transform:scaleX(0.8937);transform-origin:0 0;">240,00</div>
<div class="a" style="left:17px;top:661px;width:702px;height:19px;background:#f6f6f2;"></div>
<svg class="a" style="left:17px;top:661px;" width="15" height="15" viewBox="0 0 15 15"><rect x="0.7" y="0.7" width="13.6" height="13.6" rx="3.2" ry="3.2" fill="#fdfdfb" stroke="#8a8a8a" stroke-width="1.2"/><path d="M5.2 3.2 H9.4 L11.4 5.2 V11.8 H5.2 V9.6" fill="none" stroke="#6e6e6e" stroke-width="1"/><path d="M5.2 3.2 V5.4" stroke="#6e6e6e" stroke-width="1"/><path d="M2.4 7.5 H8.6 M6.6 5.4 L8.8 7.5 L6.6 9.6" fill="none" stroke="#6e6e6e" stroke-width="1"/></svg>
<div class="t " style="left:39px;top:662px;font-size:11px;line-height:14px;letter-spacing:0.000px;">9</div>
<div class="a" style="left:55px;top:665px;width:11px;height:11px;background:#fff;border-top:2px solid #6c6c6c;border-left:2px solid #6c6c6c;border-right:1px solid #e4e4e0;border-bottom:1px solid #e4e4e0;"></div>
<div class="inp" style="left:81px;top:662px;width:74.5px;height:18px;"></div>
<div class="t" style="left:83px;top:664px;width:71.5px;overflow:hidden;font-size:11px;line-height:14px;letter-spacing:0.27px;">5-9</div>
<div class="inp" style="left:157px;top:662px;width:232px;height:18px;"></div>
<div class="t" style="left:159px;top:664px;width:229px;overflow:hidden;font-size:11px;line-height:14px;letter-spacing:0.27px;">Arbeitspaket CS07.3-2 Schulung</div>
<div class="inp" style="left:391px;top:662px;width:57.5px;height:18px;"></div>
<div class="t " style="left:419.661190234375px;top:664px;font-size:12px;line-height:15px;transform:scaleX(0.8938);transform-origin:0 0;">16:00</div>
<div class="t " style="left:453px;top:665px;font-size:11px;line-height:14px;">h</div>
<div class="inp" style="left:459px;top:662px;width:58px;height:18px;"></div>
<div class="t " style="left:509.03522421875px;top:664px;font-size:12px;line-height:15px;transform:scaleX(0.8937);transform-origin:0 0;">2</div>
<div class="t " style="left:520.5px;top:665px;font-size:11px;line-height:14px;">Pt</div>
<div class="inp" style="left:534px;top:662px;width:84px;height:18px;"></div>
<div class="t " style="left:574.25193203125px;top:664px;font-size:12px;line-height:15px;transform:scaleX(0.8937);transform-origin:0 0;">1.600,00</div>
<div class="inp" style="left:629.5px;top:662px;width:84px;height:18px;"></div>
<div class="t " style="left:678.696414453125px;top:664px;font-size:12px;line-height:15px;transform:scaleX(0.8937);transform-origin:0 0;">560,00</div>
<div class="a" style="left:17px;top:681px;width:702px;height:19px;background:#f6f6f2;"></div>
<svg class="a" style="left:17px;top:681px;" width="15" height="15" viewBox="0 0 15 15"><rect x="0.7" y="0.7" width="13.6" height="13.6" rx="3.2" ry="3.2" fill="#fdfdfb" stroke="#8a8a8a" stroke-width="1.2"/><path d="M5.2 3.2 H9.4 L11.4 5.2 V11.8 H5.2 V9.6" fill="none" stroke="#6e6e6e" stroke-width="1"/><path d="M5.2 3.2 V5.4" stroke="#6e6e6e" stroke-width="1"/><path d="M2.4 7.5 H8.6 M6.6 5.4 L8.8 7.5 L6.6 9.6" fill="none" stroke="#6e6e6e" stroke-width="1"/></svg>
<div class="t " style="left:39px;top:682px;font-size:11px;line-height:14px;letter-spacing:0.000px;">10</div>
<div class="a" style="left:55px;top:685px;width:11px;height:11px;background:#fff;border-top:2px solid #6c6c6c;border-left:2px solid #6c6c6c;border-right:1px solid #e4e4e0;border-bottom:1px solid #e4e4e0;"></div>
<div class="inp" style="left:81px;top:682px;width:74.5px;height:18px;"></div>
<div class="t" style="left:83px;top:684px;width:71.5px;overflow:hidden;font-size:11px;line-height:14px;letter-spacing:0.27px;">5-11</div>
<div class="inp" style="left:157px;top:682px;width:232px;height:18px;"></div>
<div class="t" style="left:159px;top:684px;width:229px;overflow:hidden;font-size:11px;line-height:14px;letter-spacing:0.27px;">Budget CS07-2 Externer Berater</div>
<div class="inp" style="left:391px;top:682px;width:57.5px;height:18px;"></div>
<div class="t " style="left:425.625966015625px;top:684px;font-size:12px;line-height:15px;transform:scaleX(0.8937);transform-origin:0 0;">1:00</div>
<div class="t " style="left:453px;top:685px;font-size:11px;line-height:14px;">h</div>
<div class="inp" style="left:459px;top:682px;width:58px;height:18px;"></div>
<div class="t " style="left:488.161190234375px;top:684px;font-size:12px;line-height:15px;transform:scaleX(0.8938);transform-origin:0 0;">0,125</div>
<div class="t " style="left:520.5px;top:685px;font-size:11px;line-height:14px;">Pt</div>
<div class="inp" style="left:534px;top:682px;width:84px;height:18px;"></div>
<div class="t " style="left:574.25193203125px;top:684px;font-size:12px;line-height:15px;transform:scaleX(0.8937);transform-origin:0 0;">4.000,00</div>
<div class="inp" style="left:629.5px;top:682px;width:84px;height:18px;"></div>
<div class="t " style="left:669.75193203125px;top:684px;font-size:12px;line-height:15px;transform:scaleX(0.8937);transform-origin:0 0;">3.400,00</div>
<div class="a" style="left:437.5px;top:52px;width:623px;height:388px;background:#fff;"></div>
<div class="win" style="left:439px;top:53.5px;width:621px;height:385.5px;border-width:2px;border-color:#8f8b7a;"></div>
<div class="a tb" style="left:441px;top:55px;width:617px;height:39.5px;border-bottom-width:1.5px;"></div>
<div class="btn" style="left:443.3px;top:60px;width:26px;height:26px;border-radius:3px;"></div><svg class="a" style="left:446px;top:62.6px;" width="20.8" height="20.8" viewBox="0 0 16 16"><path d="M2.5 2.5 L14.3 14.3 M14.3 2.5 L2.5 14.3" stroke="#c4a21a" stroke-width="4.6" stroke-linecap="butt" fill="none"/><path d="M3 3 L13.8 13.8 M13.8 3 L3 13.8" stroke="#f2d83c" stroke-width="3.3" stroke-linecap="butt" fill="none"/></svg>
<div class="btn" style="left:478.3px;top:61px;width:26px;height:26px;border-radius:3px;"></div><svg class="a" style="left:481px;top:63.6px;" width="20.8" height="20.8" viewBox="0 0 16 16"><text x="9" y="15.4" text-anchor="middle" font-family="Liberation Sans, Arial, sans-serif" font-weight="normal" font-size="18.5" fill="#f0d232" stroke="#c9a51c" stroke-width="1.1">?</text></svg>
<div class="a" style="left:528px;top:62px;width:26px;height:26px;background:#fff;border:1px solid #c4c4c4;"></div><svg class="a" style="left:531px;top:63.6px;" width="20" height="20" viewBox="0 0 16 16"><path d="M10.5 2 L13.2 1.2 V13.6 L10.5 15 Z" fill="#d9b93a" stroke="#9a8020" stroke-width="0.5"/><rect x="4.2" y="1.6" width="6.6" height="13.6" fill="#d62626" stroke="#a01414" stroke-width="0.7"/><rect x="5.6" y="3.2" width="3.8" height="1.7" fill="#1c28e8"/><rect x="5.6" y="4.9" width="3.8" height="3.2" fill="#ffffff"/><circle cx="7.5" cy="11.3" r="1.5" fill="#ffffff" stroke="#8a8a8a" stroke-width="0.5"/></svg>
<div class="a" style="left:553px;top:62px;width:264px;height:26px;background:#e2e2e2;border:1px solid #bdbdbd;"></div>
<div class="t " style="left:567.3px;top:67px;font-size:15px;line-height:18px;letter-spacing:0.144px;">Projekt CS07 Einführung Projectile</div>
<div class="a bar" style="left:443px;top:95.5px;width:613px;height:37.5px;border-bottom-width:1.5px;"></div>
<div class="btn l" style="left:446.8px;top:101.7px;width:26px;height:26px;border-radius:3px;"></div><svg class="a" style="left:449.40000000000003px;top:104.3px;" width="20.8" height="20.8" viewBox="0 0 16 16"><rect x="0.8" y="1" width="14.6" height="14.2" fill="#1a1a1a"/><rect x="3" y="1.6" width="10" height="6.8" fill="#e9e6c6"/><rect x="1.6" y="1.8" width="1" height="12.6" fill="#8a8a86"/><rect x="13.6" y="1.8" width="1" height="12.6" fill="#8a8a86"/><rect x="3.6" y="9.8" width="9" height="5.4" fill="#d8d8d4"/><rect x="4.4" y="10.4" width="5.6" height="4.8" fill="#000"/><rect x="10.6" y="10.6" width="1.6" height="4" fill="#f4f4f0"/></svg>
<div class="btn l" style="left:477px;top:101.7px;width:26px;height:26px;border-radius:3px;"></div><svg class="a" style="left:479.6px;top:104.3px;" width="20.8" height="20.8" viewBox="0 0 16 16"><path d="M3 1.5 H8.5 L11.5 4.5 V12.5 H3 Z" fill="#ece8d2" stroke="#77776f" stroke-width="0.8"/><path d="M8.5 1.5 V4.5 H11.5" fill="#fbfaf0" stroke="#77776f" stroke-width="0.7"/><path d="M7.6 8.6 L14.4 15.2 M14.4 8.6 L7.6 15.2" stroke="#e0343a" stroke-width="2" stroke-linecap="round" fill="none"/></svg>
<div class="btn l" style="left:508px;top:101.7px;width:26px;height:26px;border-radius:3px;"></div><svg class="a" style="left:510.6px;top:104.3px;" width="20.8" height="20.8" viewBox="0 0 16 16"><path d="M3.4 8.2 H12.6 L15 12 V15 H1 V12 Z" fill="#f1ede0" stroke="#a7a59b" stroke-width="0.8"/><path d="M1 12 H5 Q5.5 13.6 8 13.6 Q10.5 13.6 11 12 H15" fill="none" stroke="#a7a59b" stroke-width="0.8"/><path d="M4.6 9.4 H11.4 L12.4 11 H3.6 Z" fill="#ffffff" stroke="none"/><path d="M6.2 0.8 H9.8 V4.2 H13 L8 9.6 L3 4.2 H6.2 Z" fill="#e5484e" stroke="#efa0a2" stroke-width="0.7"/></svg>
<div class="btn l" style="left:538.8px;top:101.7px;width:26px;height:26px;border-radius:3px;"></div><svg class="a" style="left:541.4px;top:104.3px;" width="20.8" height="20.8" viewBox="0 0 16 16"><path d="M7 1.2 H12.4 L14.6 3.4 V11.6 H7 Z" fill="#dcdad0" stroke="#8b8b85" stroke-width="0.7"/><path d="M5 2.4 H10.6 L12.8 4.6 V13 H5 Z" fill="#e4e2d8" stroke="#8b8b85" stroke-width="0.7"/><path d="M2.4 4 H9.4 L10.8 5.4 V14.8 H2.4 Z" fill="#efecd9" stroke="#8b8b85" stroke-width="0.8"/><path d="M12.4 1.2 V3.4 H14.6 M10.6 2.4 V4.6 H12.8" fill="none" stroke="#8b8b85" stroke-width="0.6"/></svg>
<div class="btn l" style="left:569.6px;top:101.7px;width:26px;height:26px;border-radius:3px;"></div><svg class="a" style="left:572.2px;top:104.3px;" width="20.8" height="20.8" viewBox="0 0 16 16"><path d="M2 4.4 L3.2 3 H7 L8 4.2 H13.2 V7 H2 Z" fill="#e7cdb0" stroke="#a58a68" stroke-width="0.7"/><path d="M2 13.2 V4.6 H13.2 V7" fill="#ead6c0" stroke="#a58a68" stroke-width="0.7"/><path d="M4.4 6.6 H15.4 L12.8 13.4 H1.8 Z" fill="#f0dd5a" stroke="#a99a34" stroke-width="0.8"/><path d="M5 7.4 H14.2 L13.4 9.4 H4.2 Z" fill="#f8ec90" stroke="none"/></svg>
<div class="btn l" style="left:629px;top:101.7px;width:26px;height:26px;border-radius:3px;"></div><svg class="a" style="left:631.6px;top:104.3px;" width="20.8" height="20.8" viewBox="0 0 16 16"><rect x="1" y="3" width="3.8" height="3.8" fill="#1414f2"/><rect x="11.2" y="9.6" width="3.8" height="3.8" fill="#1414f2"/><path d="M4.8 4.9 H6.8 V11.5 H9" fill="none" stroke="#222" stroke-width="1"/><path d="M8.4 9.6 L11.2 11.5 L8.4 13.4 Z" fill="#111"/></svg>
<div class="btn l" style="left:659.8px;top:101.7px;width:26px;height:26px;border-radius:3px;"></div><svg class="a" style="left:662.4px;top:104.3px;" width="20.8" height="20.8" viewBox="0 0 16 16"><rect x="3.4" y="1.4" width="7.6" height="10.2" fill="#c4cfe0" stroke="#8a8e98" stroke-width="0.7"/><rect x="4.2" y="2.2" width="6" height="2" fill="#f4edb4"/><rect x="4.2" y="5" width="2.2" height="1.6" fill="#6f8fd0"/><rect x="7.2" y="5" width="3" height="1.6" fill="#dfe5f0"/><rect x="4.2" y="7.4" width="2.2" height="1.6" fill="#6f8fd0"/><circle cx="10" cy="11" r="4.2" fill="#e9e9e7" stroke="#8c8c8a" stroke-width="0.8"/><path d="M7.9 11.6 A2.2 2.2 0 0 1 11.6 9.4" fill="none" stroke="#333" stroke-width="1.2"/><path d="M12.1 10.4 A2.2 2.2 0 0 1 8.4 12.6" fill="none" stroke="#333" stroke-width="1.2"/><path d="M11 8.4 L12.6 9.8 L10.6 10.4 Z M9 13.6 L7.4 12.2 L9.4 11.6 Z" fill="#333"/></svg>
<div class="sep" style="left:614.7px;top:98px;height:33px;width:2.5px;border-left-width:1.3px;"></div>
<div class="sep" style="left:704.7px;top:98px;height:33px;width:2.5px;border-left-width:1.3px;"></div>
<div class="t blue" style="left:723.5px;top:106px;font-size:15px;line-height:18px;letter-spacing:0.091px;">Dokument</div>
<div class="t blue" style="left:802.6px;top:106px;font-size:15px;line-height:18px;letter-spacing:0.005px;">Bearbeiten</div>
<div class="t blue" style="left:885.6px;top:106px;font-size:15px;line-height:18px;letter-spacing:0.335px;">Ansicht</div>
<div class="t blue" style="left:946.9px;top:106px;font-size:15px;line-height:18px;letter-spacing:0.247px;">Aktionen</div>
<div class="tab" style="left:445px;top:144.4px;width:76px;height:29.6px;border-right:2px solid #8b8b87;box-shadow:none;"></div>
<div class="t " style="left:451.7px;top:153.6px;font-size:12.4px;line-height:15.4px;letter-spacing:-0.157px;">Stammblatt</div>
<div class="tab" style="left:523.6px;top:144.4px;width:65px;height:29.6px;border-right:2px solid #8b8b87;box-shadow:none;"></div>
<div class="t " style="left:529.8px;top:153.6px;font-size:12.4px;line-height:15.4px;letter-spacing:0.021px;">Beteiligte</div>
<div class="tab" style="left:591px;top:144.4px;width:60.6px;height:29.6px;border-right:2px solid #8b8b87;box-shadow:none;"></div>
<div class="t " style="left:597.3px;top:153.6px;font-size:12.4px;line-height:15.4px;letter-spacing:0.051px;">Portfolio</div>
<div class="tab" style="left:653.8px;top:144.4px;width:49.6px;height:29.6px;border-right:2px solid #8b8b87;box-shadow:none;"></div>
<div class="t " style="left:660.9px;top:153.6px;font-size:12.4px;line-height:15.4px;letter-spacing:0.047px;">Zeiten</div>
<div class="tab" style="left:705.8px;top:144.4px;width:54px;height:29.6px;border-right:2px solid #8b8b87;box-shadow:none;"></div>
<div class="t " style="left:712px;top:153.6px;font-size:12.4px;line-height:15.4px;letter-spacing:0.080px;">Budget</div>
<div class="tab" style="left:762.2px;top:144.4px;width:66.8px;height:29.6px;border-right:2px solid #8b8b87;box-shadow:none;"></div>
<div class="t " style="left:769px;top:153.6px;font-size:12.4px;line-height:15.4px;letter-spacing:0.113px;">Finanzen</div>
<div class="tab on" style="left:831.5px;top:144.4px;width:73.4px;height:29.6px;border-right:2px solid #8f8b6a;box-shadow:none;"></div>
<div class="t " style="left:838px;top:153.6px;font-size:12.4px;line-height:15.4px;letter-spacing:0.055px;">Bestellung</div>
<div class="tab" style="left:907.2px;top:144.4px;width:70.6px;height:29.6px;border-right:2px solid #8b8b87;box-shadow:none;"></div>
<div class="t " style="left:913.3px;top:153.6px;font-size:12.4px;line-height:15.4px;letter-spacing:0.255px;">Sonstiges</div>
<div class="tab" style="left:980.3px;top:144.4px;width:35.2px;height:29.6px;border-right:2px solid #8b8b87;box-shadow:none;"></div>
<div class="t " style="left:987px;top:153.6px;font-size:12.4px;line-height:15.4px;letter-spacing:0.108px;">Alle</div>
<div class="lbl" style="left:443px;top:384.5px;width:124px;height:50.0px;border-bottom-color:#e8e8e4;"></div>
<div class="val" style="left:567px;top:384.5px;width:489px;height:50.0px;border-bottom-color:#e8e8e4;border-right:1px solid #e8e8e4;"></div>
<div class="t " style="left:450.5px;top:391.5px;font-size:15px;line-height:18px;letter-spacing:0.084px;">RK-</div>
<div class="t " style="left:450.5px;top:410.5px;font-size:15px;line-height:18px;letter-spacing:0.123px;">Pauschalpreis</div>
<div class="lbl" style="left:443px;top:333px;width:124px;height:51.5px;border-bottom-color:#e8e8e4;"></div>
<div class="val" style="left:567px;top:333px;width:489px;height:51.5px;border-bottom-color:#e8e8e4;border-right:1px solid #e8e8e4;"></div>
<div class="t " style="left:450.5px;top:340px;font-size:15px;line-height:18px;letter-spacing:0.084px;">RK-</div>
<div class="t " style="left:450.5px;top:359px;font-size:15px;line-height:18px;letter-spacing:0.031px;">Abrechnungsart</div>
<div class="lbl" style="left:443px;top:294px;width:124px;height:39px;border-bottom-color:#e8e8e4;"></div>
<div class="val" style="left:567px;top:294px;width:489px;height:39px;border-bottom-color:#e8e8e4;border-right:1px solid #e8e8e4;"></div>
<div class="t " style="left:450.5px;top:301px;font-size:15px;line-height:18px;letter-spacing:0.172px;">Bestelldatum</div>
<div class="lbl" style="left:443px;top:255px;width:124px;height:39px;border-bottom-color:#e8e8e4;"></div>
<div class="val" style="left:567px;top:255px;width:489px;height:39px;border-bottom-color:#e8e8e4;border-right:1px solid #e8e8e4;"></div>
<div class="t " style="left:450.5px;top:262px;font-size:15px;line-height:18px;letter-spacing:0.197px;">Bestellnummer</div>
<div class="lbl" style="left:443px;top:216px;width:124px;height:39px;border-bottom-color:#e8e8e4;"></div>
<div class="val" style="left:567px;top:216px;width:489px;height:39px;border-bottom-color:#e8e8e4;border-right:1px solid #e8e8e4;"></div>
<div class="t " style="left:450.5px;top:223px;font-size:15px;line-height:18px;letter-spacing:0.144px;">Bestellwert</div>
<div class="lbl" style="left:443px;top:176px;width:124px;height:40px;border-bottom-color:#e8e8e4;"></div>
<div class="val" style="left:567px;top:176px;width:489px;height:40px;border-bottom-color:#e8e8e4;border-right:1px solid #e8e8e4;"></div>
<div class="t " style="left:450.5px;top:184px;font-size:15px;line-height:18px;letter-spacing:-0.179px;">Rabatt</div>
<div class="inp w" style="left:573px;top:184px;width:114px;height:24px;border-color:#93a4b8;"></div>
<div class="t " style="left:692px;top:188.5px;font-size:15px;line-height:18px;">%</div>
<div class="inp w" style="left:573px;top:223px;width:114px;height:24px;border-color:#93a4b8;"></div>
<div class="t " style="left:618.5px;top:226px;font-size:16.5px;line-height:19.5px;transform:scaleX(0.8855);transform-origin:0 0;">22.220,00</div>
<div class="t " style="left:692px;top:227.5px;font-size:15px;line-height:18px;letter-spacing:0.200px;">EUR</div>
<div class="inp w" style="left:573px;top:262px;width:384.5px;height:24px;border-color:#93a4b8;"></div>
<div class="t " style="left:576px;top:265px;font-size:16.5px;line-height:19.5px;transform:scaleX(0.8809);transform-origin:0 0;">547800</div>
<div class="inp w" style="left:573px;top:301px;width:99.5px;height:24px;border-color:#93a4b8;"></div>
<div class="t " style="left:575.5px;top:304px;font-size:16.5px;line-height:19.5px;transform:scaleX(0.8840);transform-origin:0 0;">26.06.2006</div>
<div class="a" style="left:573px;top:339.5px;width:127.5px;height:24px;background:#fff;border:2px solid #62625e;border-right:1px solid #7c7c78;border-bottom:1px solid #7c7c78;"></div>
<div class="a" style="left:681.3px;top:342px;width:17.5px;height:20px;background:#d4d0c8;border:1px solid #fff;border-right-color:#66665f;border-bottom-color:#66665f;"></div>
<svg class="a" style="left:685.5px;top:349.5px;" width="9" height="5" viewBox="0 0 9 5"><path d="M0.3 0 H8.7 L4.5 4.6 Z" fill="#000"/></svg>
<div class="t " style="left:579.5px;top:344px;font-size:15px;line-height:18px;letter-spacing:0.251px;">nach Aufwand</div>
<div class="inp w" style="left:573px;top:392px;width:114px;height:24px;border-color:#93a4b8;"></div>
<div class="t " style="left:692px;top:396.5px;font-size:15px;line-height:18px;letter-spacing:0.200px;">EUR</div>
<svg class="a" style="left:681.6px;top:300.3px;" width="19.5" height="19.5" viewBox="0 0 15 15"><rect x="0.7" y="0.7" width="13.6" height="13.6" rx="3.4" ry="3.4" fill="#fdfdfb" stroke="#6e6e6e" stroke-width="1.0"/><path d="M9 4.6 V10.4 L5.4 7.5 Z" fill="#333"/></svg>
<svg class="a" style="left:709.8px;top:300.3px;" width="19.5" height="19.5" viewBox="0 0 15 15"><rect x="0.7" y="0.7" width="13.6" height="13.6" rx="3.4" ry="3.4" fill="#fdfdfb" stroke="#6e6e6e" stroke-width="1.0"/><path d="M6 4.6 V10.4 L9.6 7.5 Z" fill="#333"/></svg>
<svg class="a" style="left:738.3px;top:300.3px;" width="19.5" height="19.5" viewBox="0 0 15 15"><rect x="0.7" y="0.7" width="13.6" height="13.6" rx="3.4" ry="3.4" fill="#fdfdfb" stroke="#6e6e6e" stroke-width="1.0"/><rect x="2.6" y="3.4" width="9.8" height="8.4" fill="#d8d8d6" stroke="#555" stroke-width="0.8"/><rect x="2.6" y="3.4" width="9.8" height="1.6" fill="#666"/><path d="M2.6 7 H12.4 M2.6 9.4 H12.4 M5 5 V11.8 M7.5 5 V11.8 M10 5 V11.8" stroke="#777" stroke-width="0.5"/><rect x="6.4" y="7" width="2.2" height="2.4" fill="#444"/></svg>
<svg class="a" style="left:767px;top:300.3px;" width="19.5" height="19.5" viewBox="0 0 15 15"><rect x="0.7" y="0.7" width="13.6" height="13.6" rx="3.4" ry="3.4" fill="#fdfdfb" stroke="#6e6e6e" stroke-width="1.0"/><rect x="2.6" y="3.4" width="9.8" height="8.4" fill="#e2e2e0" stroke="#555" stroke-width="0.8"/><rect x="2.6" y="3.4" width="9.8" height="1.6" fill="#666"/><path d="M2.6 6.6 H12.4 M2.6 8.2 H12.4 M2.6 9.8 H12.4 M4.2 5 V11.8 M5.8 5 V11.8 M7.4 5 V11.8 M9 5 V11.8 M10.6 5 V11.8" stroke="#666" stroke-width="0.5"/></svg>
<svg class="a" style="left:871px;top:168.8px;" width="21" height="26.5" viewBox="0 0 21 26.5"><path d="M5.4 2 Q5.4 0.6 7.5 0.6 Q9.6 0.6 9.6 2 V6.8 Q11.6 5.6 13.2 7.2 Q15 6.6 16.4 8.4 Q18.8 8 20.1 10.2 V18.4 L18 23 V25.8 H6.6 V24.2 L0.8 14 Q-0.2 11.8 1.6 11 Q3.2 10.6 5.4 13.6 Z" fill="#fff" stroke="#000" stroke-width="1.05" stroke-linejoin="round"/><path d="M9.6 6.8 V11.6 M13.2 7.4 V12 M16.4 8.6 V12.6" stroke="#000" stroke-width="1" fill="none"/></svg>
</body></html>
